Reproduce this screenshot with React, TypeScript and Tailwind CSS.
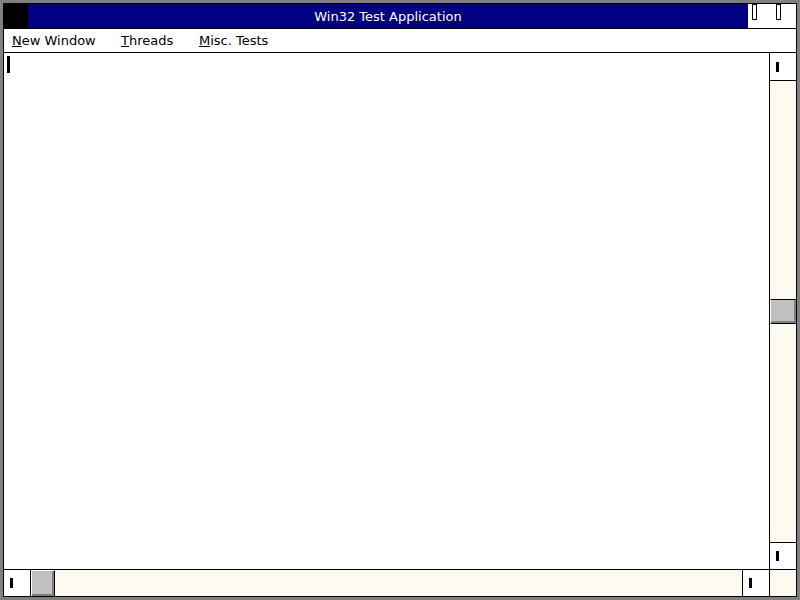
const font = { fontFamily: '"DejaVu Sans", "Liberation Sans", sans-serif' };

const Glyph = () => <div className="w-[3px] h-[10px] bg-black" />;

const ArrowButton = ({ className }: { className: string }) => (
  <div className={`bg-white flex items-center pl-[6px] shrink-0 ${className}`}>
    <Glyph />
  </div>
);

const Thumb = ({ className }: { className: string }) => (
  <div className={`shrink-0 bg-[#c0c0c0] border-t border-l border-white shadow-[inset_-2px_-2px_0_#808080] ${className}`} />
);

const CaptionButton = () => (
  <div className="w-[5px] h-[16px] border-[1.5px] border-black bg-white self-start" />
);

export default function App() {
  return (
    <div className="w-[800px] h-[600px] bg-[#808080] p-[3px]" style={font}>
      <div className="w-full h-full border border-black bg-white flex flex-col">
        {/* title bar */}
        <div className="h-[24px] flex shrink-0">
          <div className="w-[24px] bg-black shrink-0" />
          <div className="w-[720px] bg-[#000080] text-white text-[13px] flex items-center justify-center pt-[2px]">
            Win32 Test Application
          </div>
          <div className="flex-1 bg-white flex pl-[4px] gap-[19px]">
            <CaptionButton />
            <CaptionButton />
          </div>
        </div>
        <div className="h-px bg-black shrink-0" />
        {/* menu bar */}
        <div className="h-[23px] flex items-center text-[13px] text-black shrink-0 pl-[8px]">
          <span className="w-[109px]">
            <span className="underline">N</span>ew Window
          </span>
          <span className="w-[78px]">
            <span className="underline">T</span>hreads
          </span>
          <span>
            <span className="underline">M</span>isc. Tests
          </span>
        </div>
        <div className="h-px bg-black shrink-0" />
        {/* client */}
        <div className="flex-1 flex min-h-0">
          <div className="flex-1 bg-white pt-[3px] pl-[3px]">
            <div className="w-[3px] h-[17px] bg-black" />
          </div>
          <div className="w-[27px] border-l border-black flex flex-col bg-[#fffaf0]">
            <ArrowButton className="h-[28px] border-b border-black" />
            <div className="h-[218px]" />
            <Thumb className="h-[25px] border-b border-b-black border-t-black" />
            <div className="flex-1" />
            <ArrowButton className="h-[27px] border-t border-black" />
          </div>
        </div>
        {/* horizontal scrollbar */}
        <div className="h-[27px] border-t border-black flex shrink-0 bg-[#fffaf0]">
          <ArrowButton className="w-[27px] border-r border-black" />
          <Thumb className="w-[24px] border-r border-r-black" />
          <div className="flex-1" />
          <ArrowButton className="w-[27px] border-l border-black" />
          <div className="w-[27px] border-l border-black" />
        </div>
      </div>
    </div>
  );
}
